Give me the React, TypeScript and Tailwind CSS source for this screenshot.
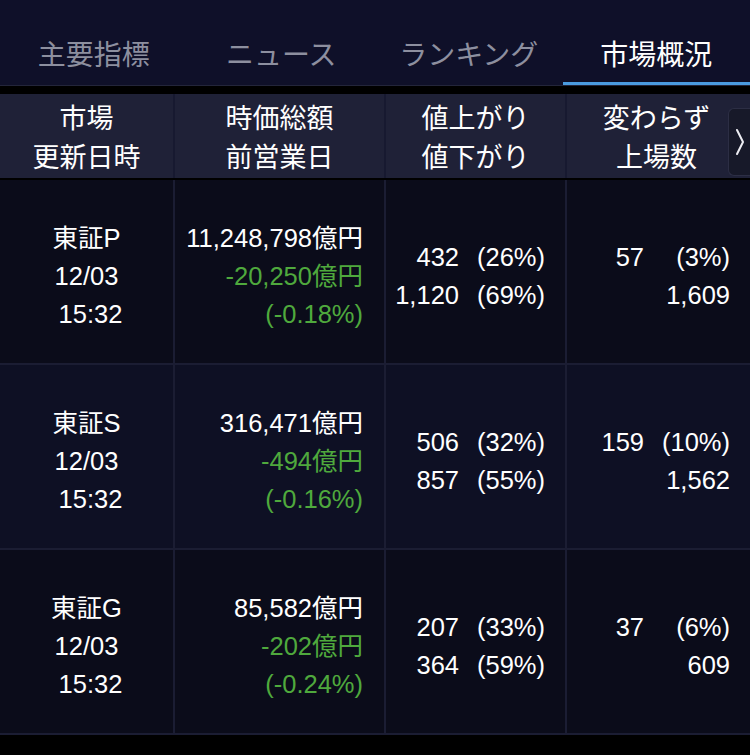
import React from "react";

// market rows
interface MarketRow {
  name: string;
  date: string;
  time: string;
  cap: string;
  diff: string;
  pct: string;
  up: [string, string];
  down: [string, string];
  flat: [string, string];
  listed: string;
  alt?: boolean;
}

const rows: MarketRow[] = [
  {
    name: "東証P",
    date: "12/03",
    time: "15:32",
    cap: "11,248,798億円",
    diff: "-20,250億円",
    pct: "(-0.18%)",
    up: ["432", "(26%)"],
    down: ["1,120", "(69%)"],
    flat: ["57", "(3%)"],
    listed: "1,609",
  },
  {
    name: "東証S",
    date: "12/03",
    time: "15:32",
    cap: "316,471億円",
    diff: "-494億円",
    pct: "(-0.16%)",
    up: ["506", "(32%)"],
    down: ["857", "(55%)"],
    flat: ["159", "(10%)"],
    listed: "1,562",
    alt: true,
  },
  {
    name: "東証G",
    date: "12/03",
    time: "15:32",
    cap: "85,582億円",
    diff: "-202億円",
    pct: "(-0.24%)",
    up: ["207", "(33%)"],
    down: ["364", "(59%)"],
    flat: ["37", "(6%)"],
    listed: "609",
  },
];

const tabs = ["主要指標", "ニュース", "ランキング", "市場概況"];

const NumPct = ({ v }: { v: [string, string] }) => (
  <div className="flex justify-end gap-[12px]">
    <span>{v[0]}</span>
    <span className="w-[74px] text-right">{v[1]}</span>
  </div>
);

export default function App() {
  return (
    <div
      className="w-[750px] h-[755px] bg-black text-white overflow-hidden"
      style={{ fontFamily: '"Liberation Sans", "Noto Sans CJK JP", sans-serif' }}
    >
      {/* tab bar */}
      <div className="flex h-[86px] bg-[#0f1029] border-b border-[#23253a]">
        {tabs.map((t, i) => (
          <div
            key={t}
            className={
              "flex-1 flex items-center justify-center text-[28px] pt-[24px] border-b-[3px] " +
              (i === 3
                ? "text-white border-[#4a9be0]"
                : "text-[#8d8f9f] border-transparent")
            }
            style={{ fontFamily: '"Noto Sans CJK JP", sans-serif' }}
          >
            {t}
          </div>
        ))}
      </div>

      <div className="h-[8px] bg-black" />

      {/* header row */}
      <div
        className="relative grid grid-cols-[175px_211px_181px_1fr] h-[86px] bg-[#1f2137] text-[27px] leading-[39px] border-b-2 border-black"
        style={{ fontFamily: '"Noto Sans CJK JP", sans-serif' }}
      >
        <div className="flex flex-col items-center justify-center border-r-2 border-[#171930]">
          <span>市場</span>
          <span>更新日時</span>
        </div>
        <div className="flex flex-col items-center justify-center border-r-2 border-[#171930]">
          <span>時価総額</span>
          <span>前営業日</span>
        </div>
        <div className="flex flex-col items-center justify-center border-r-2 border-[#171930]">
          <span>値上がり</span>
          <span>値下がり</span>
        </div>
        <div className="flex flex-col items-center justify-center pr-[4px]">
          <span>変わらず</span>
          <span>上場数</span>
        </div>
        {/* scroll arrow */}
        <div className="absolute right-0 top-[14px] w-[22px] h-[68px] rounded-l-md bg-[#171929] border border-r-0 border-[#2c2e44] flex items-center justify-center">
          <svg width="12" height="28" viewBox="0 0 12 28" fill="none">
            <path d="M3 2 L9 14 L3 26" stroke="#ececf2" strokeWidth="2" strokeLinecap="round" strokeLinejoin="round" />
          </svg>
        </div>
      </div>

      {/* data rows */}
      {rows.map((r) => (
        <div
          key={r.name}
          className={
            "grid grid-cols-[175px_211px_181px_1fr] h-[185px] border-b-2 border-[#1b1d33] text-[25.5px] leading-[38px] " +
            (r.alt ? "bg-[#0e1024]" : "bg-[#0b0c1a]")
          }
        >
          <div className="flex flex-col items-center justify-center border-r-2 border-[#1b1d33] pt-[8px]">
            <span>{r.name}</span>
            <span>{r.date}</span>
            <span className="pl-[8px]">{r.time}</span>
          </div>
          <div className="flex flex-col items-end justify-center pr-[21px] border-r-2 border-[#1b1d33] pt-[8px]">
            <span>{r.cap}</span>
            <span className="text-[#4fa93d]">{r.diff}</span>
            <span className="text-[#4fa93d]">{r.pct}</span>
          </div>
          <div className="flex flex-col justify-center pr-[20px] border-r-2 border-[#1b1d33] pt-[8px]">
            <NumPct v={r.up} />
            <NumPct v={r.down} />
          </div>
          <div className="flex flex-col justify-center pr-[20px] pt-[8px]">
            <NumPct v={r.flat} />
            <div className="text-right">{r.listed}</div>
          </div>
        </div>
      ))}
    </div>
  );
}
